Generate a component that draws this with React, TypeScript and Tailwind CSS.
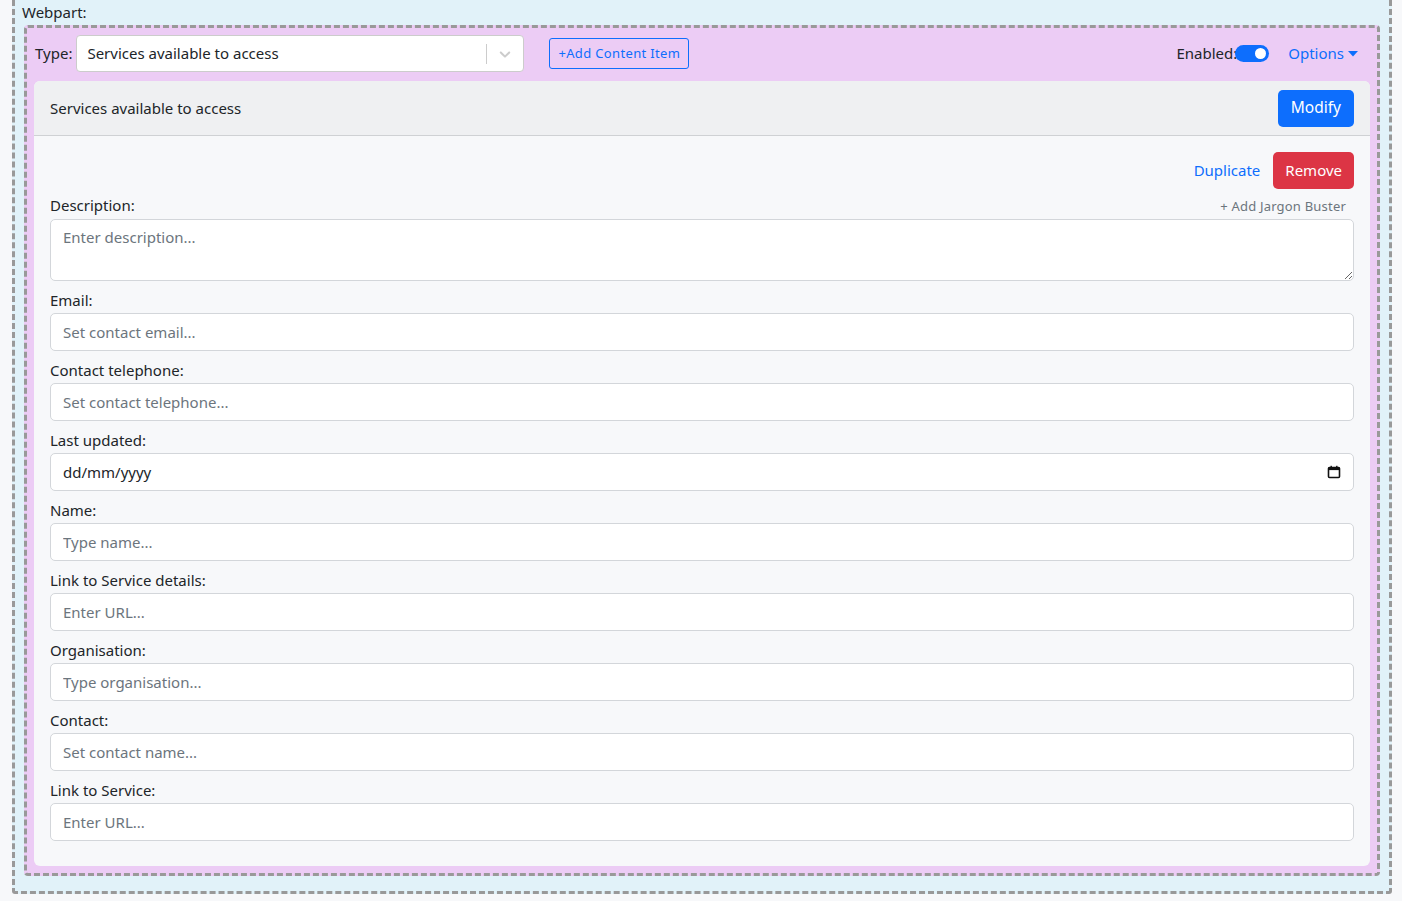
import React from "react";

const fields: { label: string; placeholder: string; kind?: "date" }[] = [
  { label: "Email:", placeholder: "Set contact email..." },
  { label: "Contact telephone:", placeholder: "Set contact telephone..." },
  { label: "Last updated:", placeholder: "dd/mm/yyyy", kind: "date" },
  { label: "Name:", placeholder: "Type name..." },
  { label: "Link to Service details:", placeholder: "Enter URL..." },
  { label: "Organisation:", placeholder: "Type organisation..." },
  { label: "Contact:", placeholder: "Set contact name..." },
  { label: "Link to Service:", placeholder: "Enter URL..." },
];

const inputCls =
  "block w-full h-[38px] rounded-[5px] border border-[#d3d6da] bg-white px-3 text-[15px] text-[#212529] placeholder:text-[#6c757d] outline-none";

const CalendarIcon = () => (
  <svg width="14" height="14" viewBox="0 0 14 14" fill="none">
    <rect x="1.5" y="2.5" width="11" height="10" rx="1" stroke="#111" strokeWidth="1.6" />
    <rect x="1.5" y="2.5" width="11" height="2.6" fill="#111" />
    <rect x="3.5" y="0.8" width="1.4" height="2.4" fill="#111" />
    <rect x="9.1" y="0.8" width="1.4" height="2.4" fill="#111" />
  </svg>
);

export default function App() {
  return (
    <div
      className="min-h-screen bg-[#f7f8fa] pl-3 pr-[10px] text-[#212529]"
      style={{ fontFamily: '"Noto Sans", "Open Sans", sans-serif' }}
    >
      <div className="border-[3px] border-t-0 border-dashed border-[#999999] bg-[#e1f2f9] px-[9px] pb-[15px] rounded-b-[3px]">
        <div className="pt-[2px] text-[15px] leading-[20px] -ml-[2px] h-[25px]">Webpart:</div>
        <div className="border-[3px] border-dashed border-[#999999] bg-[#ecccf5] rounded-[4px] px-[7px] pb-[7px]">
          {/* top bar */}
          <div className="flex items-center h-[53px] pb-[2px]">
            <span className="text-[15px] ml-[1px] mr-[4px]">Type:</span>
            <div className="flex items-center w-[448px] h-[37px] bg-white border border-[#cccccc] rounded-[4px]">
              <span className="flex-1 pl-[10px] text-[15px]">Services available to access</span>
              <span className="w-px h-[20px] bg-[#cccccc]" />
              <span className="w-[36px] flex justify-center">
                <svg width="18" height="18" viewBox="0 0 20 20" fill="#cccccc">
                  <path d="M4.516 7.548c0.436-0.446 1.043-0.481 1.576 0l3.908 3.747 3.908-3.747c0.533-0.481 1.141-0.446 1.574 0 0.436 0.445 0.408 1.197 0 1.615-0.406 0.418-4.695 4.502-4.695 4.502-0.217 0.223-0.502 0.335-0.787 0.335s-0.57-0.112-0.789-0.335c0 0-4.287-4.084-4.695-4.502s-0.436-1.17 0-1.615z" />
                </svg>
              </span>
            </div>
            <button className="ml-[25px] h-[31px] px-[8px] border border-[#0d6efd] rounded-[3px] text-[13px] tracking-[0.35px] text-[#0d6efd]">
              +Add Content Item
            </button>
            <div className="flex-1" />
            <span className="text-[15px]">Enabled:</span>
            <span className="relative -ml-[2px] w-[34px] h-[17px] rounded-full bg-[#0d6efd]">
              <span className="absolute right-[3px] top-[3px] w-[11px] h-[11px] rounded-full bg-white" />
            </span>
            <span className="ml-[19px] mr-[12px] text-[15px] text-[#0d6efd] flex items-center gap-[4px]">
              Options
              <svg width="10" height="6" viewBox="0 0 10 6">
                <path d="M0 0h10L5 5.5z" fill="#0d6efd" />
              </svg>
            </span>
          </div>

          {/* card */}
          <div className="rounded-[6px] overflow-hidden bg-[#f7f8fa]">
            <div className="flex items-center justify-between h-[55px] bg-[#eff0f2] border-b border-[#cfd1d4] px-4">
              <span className="text-[15px]">Services available to access</span>
              <button className="h-[37px] px-[13px] rounded-[5px] bg-[#0d6efd] text-white text-[15.5px]">Modify</button>
            </div>
            <div className="px-4 pt-4 pb-[25px]">
              <div className="flex items-center justify-end gap-[13px]">
                <span className="text-[15px] text-[#0d6efd]">Duplicate</span>
                <button className="h-[37px] px-[12px] rounded-[5px] bg-[#dc3545] text-white text-[15px]">Remove</button>
              </div>
              <div className="flex items-end justify-between mt-[2px] h-[26px]">
                <label className="text-[15px] leading-[24px]">Description:</label>
                <span className="text-[13px] text-[#6c757d] tracking-[0.2px] mr-2 mb-[1px]">+ Add Jargon Buster</span>
              </div>
              <textarea
                placeholder="Enter description..."
                className="block w-full h-[62px] mt-[2px] rounded-[5px] border border-[#d3d6da] bg-white px-3 py-[6px] text-[15px] placeholder:text-[#6c757d] outline-none"
              />
              {fields.map((f, i) => (
                <div key={i} className="mt-[7px]">
                  <label className="block text-[15px] leading-[25px]">{f.label}</label>
                  {f.kind === "date" ? (
                    <div className={inputCls + " flex items-center justify-between"}>
                      <span className="text-[15px]">{f.placeholder}</span>
                      <CalendarIcon />
                    </div>
                  ) : (
                    <input className={inputCls} placeholder={f.placeholder} />
                  )}
                </div>
              ))}
            </div>
          </div>
        </div>
      </div>
    </div>
  );
}
